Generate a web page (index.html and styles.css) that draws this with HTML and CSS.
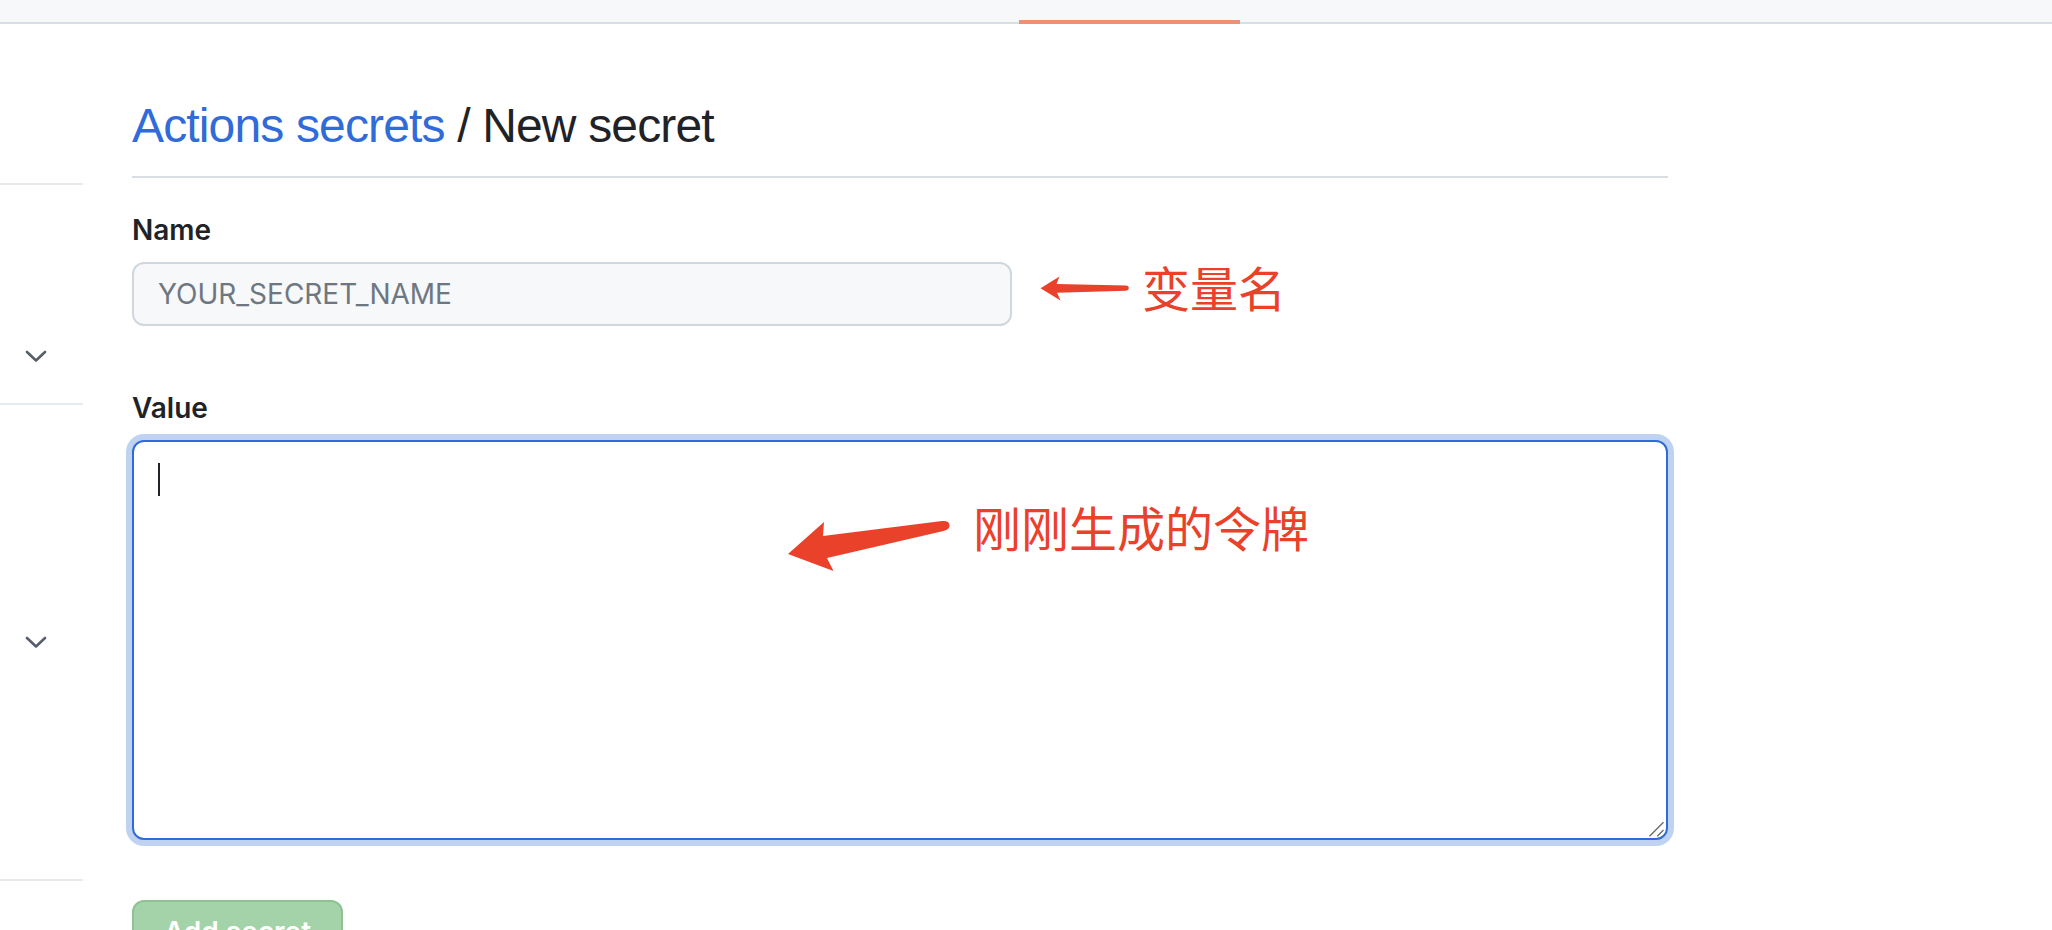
FILE: index.html
```html
<!DOCTYPE html>
<html lang="zh-CN">
<head>
<meta charset="utf-8">
<title>New secret</title>
<link rel="stylesheet" href="styles.css">
</head>
<body>
<header class="topbar">
  <div class="tab-underline"></div>
</header>
<div class="page">
  <aside class="sidebar">
    <div class="side-item side-item-first">
      <svg class="chevron" width="22" height="14" viewBox="0 0 22 14"><path d="M2 3 L11 11.5 L20 3" fill="none" stroke="#57606a" stroke-width="2.6" stroke-linecap="round" stroke-linejoin="round"/></svg>
    </div>
    <div class="side-item side-item-second">
      <svg class="chevron" width="22" height="14" viewBox="0 0 22 14"><path d="M2 3 L11 11.5 L20 3" fill="none" stroke="#57606a" stroke-width="2.6" stroke-linecap="round" stroke-linejoin="round"/></svg>
    </div>
    <div class="side-item side-item-last"></div>
  </aside>
  <main class="main">
    <h1 class="heading"><a href="#" class="heading-link">Actions secrets</a> / New secret</h1>
    <form class="form">
      <label class="label label-name" for="secret-name">Name</label>
      <div class="name-row">
        <input class="input" id="secret-name" type="text" placeholder="YOUR_SECRET_NAME">
        <svg class="arrow-small" width="92" height="30" viewBox="0 0 92 30">
          <path d="M2.5 14.3 L21.5 2.5 L18.5 10 L88 11.6 Q90.8 11.8 90.8 14.1 Q90.8 16.5 88 16.7 L19 18.8 L22.5 26.5 Z" fill="#e9412a"/>
        </svg>
        <span class="annot annot-name">变量名</span>
      </div>
      <label class="label label-value">Value</label>
      <div class="value-wrap">
        <div class="textarea" role="textbox" aria-multiline="true">
          <span class="caret"></span>
          <svg class="grip" width="16" height="16" viewBox="0 0 16 16">
            <path d="M0.5 15.2 L14.5 1.3 M8.3 15.2 L14.5 9" stroke="#6b6b6b" stroke-width="1.4" fill="none"/>
          </svg>
        </div>
        <svg class="arrow-big" width="175" height="70" viewBox="0 0 175 70">
          <path d="M8 44 L44 12 L43 26 L162 11 Q169 10.2 169.5 15 Q170 19.5 163.5 21 L47 48 L53.5 61 Z" fill="#e9412a"/>
        </svg>
        <span class="annot annot-value">刚刚生成的令牌</span>
      </div>
      <button type="button" class="btn">Add secret</button>
    </form>
  </main>
</div>
</body>
</html>
```
FILE: styles.css
```css
html, body {
  margin: 0;
  padding: 0;
  overflow: hidden;
  background: #ffffff;
}

body {
  font-family: Inter, "Liberation Sans", "Noto Sans CJK SC", sans-serif;
  color: #1f2328;
}

.topbar {
  height: 22px;
  background: #f6f8fa;
  border-bottom: 2px solid #d8dee4;
  display: flex;
  align-items: flex-end;
  padding-left: 1019px;
}

.tab-underline {
  width: 221px;
  height: 4px;
  margin-bottom: -2px;
  background: #f18e76;
}

.page {
  display: flex;
  column-gap: 49px;
}

.sidebar {
  width: 83px;
  flex: none;
  padding-top: 159px;
}

.side-item {
  border-top: 2px solid #e8ebee;
  display: flex;
  padding-left: 25px;
}

.side-item-first {
  height: 178px;
  align-items: flex-end;
  padding-bottom: 40px;
}

.side-item-second {
  height: 474px;
  align-items: center;
}

.side-item-last {
  height: 60px;
}

.chevron {
  display: block;
}

.main {
  width: 1536px;
  flex: none;
  padding-top: 72px;
}

.heading {
  margin: 0;
  font-family: "Liberation Sans", Arial, sans-serif;
  font-weight: 400;
  font-size: 48px;
  line-height: 60px;
  letter-spacing: -0.85px;
  padding-bottom: 20px;
  border-bottom: 2px solid #d8dee4;
  color: #1f2328;
}

.heading-link {
  color: #2f6bd9;
  text-decoration: none;
}

.form {
  display: flex;
  flex-direction: column;
  align-items: flex-start;
}

.label {
  display: block;
  font-weight: 600;
  font-size: 28px;
  line-height: 40px;
  color: #1f2328;
}

.label-name {
  margin-top: 32px;
}

.label-value {
  margin-top: 62px;
}

.name-row {
  display: flex;
  align-items: flex-start;
  margin-top: 12px;
}

.input {
  width: 880px;
  height: 64px;
  box-sizing: border-box;
  border: 2px solid #d0d7de;
  border-radius: 12px;
  background: #f6f8fa;
  padding: 0 24px;
  font-family: Inter, "Liberation Sans", sans-serif;
  font-size: 28px;
  color: #1f2328;
  outline: none;
}

.input::placeholder {
  color: #6e7781;
}

.arrow-small {
  display: block;
  margin-left: 26px;
  margin-top: 12px;
}

.annot {
  font-family: "Noto Sans CJK SC", sans-serif;
  color: #e9412a;
  white-space: nowrap;
}

.annot-name {
  font-size: 48px;
  line-height: 48px;
  margin-left: 12px;
  margin-top: 0;
}

.value-wrap {
  position: relative;
  margin-top: 12px;
}

.textarea {
  position: relative;
  width: 1536px;
  height: 400px;
  box-sizing: border-box;
  border: 2px solid #2f6bd9;
  border-radius: 12px;
  box-shadow: 0 0 0 6px #bfd2f2;
  padding: 21px 24px;
  background: #ffffff;
}

.caret {
  display: block;
  width: 2px;
  height: 33px;
  background: #1f2328;
}

.grip {
  position: absolute;
  right: 1px;
  bottom: 1px;
}

.arrow-big {
  position: absolute;
  left: 648px;
  top: 70px;
}

.annot-value {
  position: absolute;
  left: 841px;
  top: 62px;
  font-size: 48px;
  line-height: 48px;
}

.btn {
  margin-top: 60px;
  width: 211px;
  height: 64px;
  box-sizing: border-box;
  border: 2px solid #8ec295;
  border-radius: 12px;
  background: #a4d3a9;
  color: #ffffff;
  font-family: Inter, "Liberation Sans", sans-serif;
  font-weight: 600;
  font-size: 28px;
  line-height: 60px;
  padding: 0;
  text-align: center;
}
```
